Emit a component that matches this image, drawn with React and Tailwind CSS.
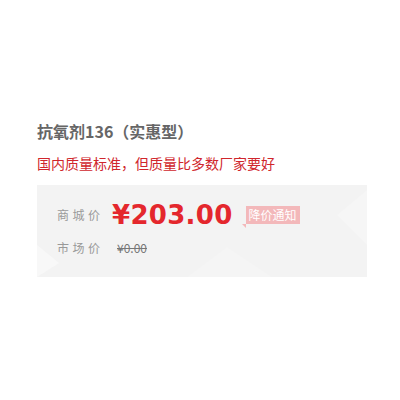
import React from 'react';

const cjk = { fontFamily: '"Noto Sans CJK SC", "Noto Sans", sans-serif' };

const PriceBox = () => {
  return (
    <div className="relative mt-[12px] h-[92px] w-[330px] overflow-hidden bg-[#f3f3f3]">
      <svg className="absolute inset-0" width="330" height="92" viewBox="0 0 330 92">
        <polygon points="0,60 22,78 0,92" fill="#f8f8f8" />
        <polygon points="150,92 190,62 235,92" fill="#f5f5f5" />
        <polygon points="300,30 330,5 330,60" fill="#f6f6f6" />
      </svg>
      <div className="relative flex flex-col pl-[20px] pt-[12px]">
        <div className="flex h-[36px] items-center">
          <span className="w-[55px] text-[12px] tracking-[3.5px] text-[#999]">商城价</span>
          <span
            className="text-[26px] font-bold leading-none tracking-[0.3px] text-[#e4272d]"
            style={{ fontFamily: '"DejaVu Sans", sans-serif' }}
          >
            ¥203.00
          </span>
          <span className="relative ml-[13px] flex h-[18px] items-center bg-[#f3b8ba] px-[3px] text-[12px] leading-none text-white">
            降价通知
            <span className="absolute bottom-[-4px] left-[-4px] h-0 w-0 border-t-[4px] border-l-[4px] border-t-[#f3b8ba] border-l-transparent" />
          </span>
        </div>
        <div className="mt-[5px] flex h-[20px] items-center">
          <span className="w-[55px] text-[12px] tracking-[3.5px] text-[#999]">市场价</span>
          <span className="ml-[5px] text-[12px] text-[#777] line-through">¥0.00</span>
        </div>
      </div>
    </div>
  );
};

export default function App() {
  return (
    <div className="h-[400px] w-[400px] bg-white pl-[37px] pt-[119px]" style={cjk}>
      <div className="h-[24px] text-[16px] leading-[24px] font-bold text-[#666]">抗氧剂136（实惠型）</div>
      <div className="mt-[10px] h-[20px] text-[14px] leading-[20px] text-[#d0262c]">
        国内质量标准，但质量比多数厂家要好
      </div>
      <PriceBox />
    </div>
  );
}
